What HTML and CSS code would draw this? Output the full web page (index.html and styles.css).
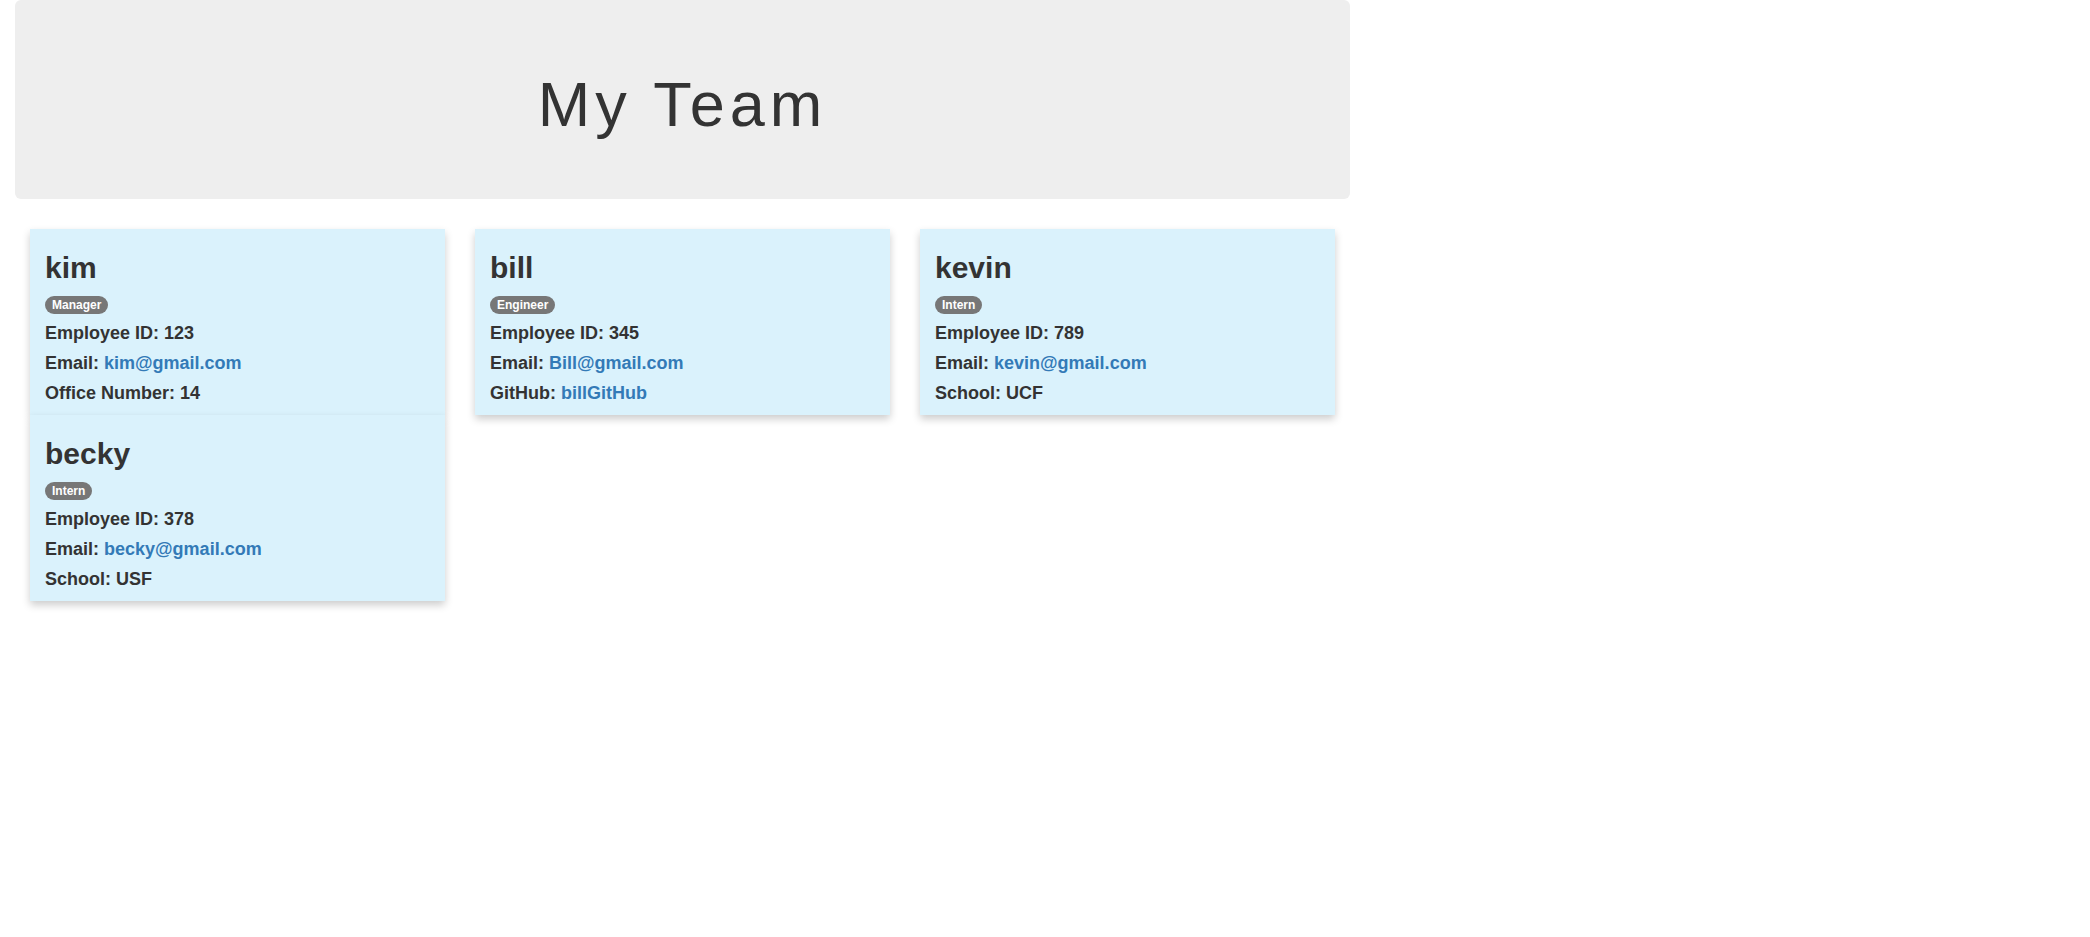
FILE: index.html
```html
<!DOCTYPE html>
<html lang="en">
<head>
<meta charset="utf-8">
<title>My Team</title>
<link rel="stylesheet" href="styles.css">
</head>
<body>
<main class="container">
  <header class="banner"><h1 class="banner-title">My Team</h1></header>
  <section class="team">
    <article class="card">
      <h2 class="name">kim</h2>
      <span class="badge">Manager</span>
      <div class="details">
        <p>Employee ID: 123</p>
        <p>Email: <a href="mailto:kim@gmail.com">kim@gmail.com</a></p>
        <p>Office Number: 14</p>
      </div>
    </article>
    <article class="card">
      <h2 class="name">bill</h2>
      <span class="badge">Engineer</span>
      <div class="details">
        <p>Employee ID: 345</p>
        <p>Email: <a href="mailto:Bill@gmail.com">Bill@gmail.com</a></p>
        <p>GitHub: <a href="https://github.com/billGitHub">billGitHub</a></p>
      </div>
    </article>
    <article class="card">
      <h2 class="name">kevin</h2>
      <span class="badge">Intern</span>
      <div class="details">
        <p>Employee ID: 789</p>
        <p>Email: <a href="mailto:kevin@gmail.com">kevin@gmail.com</a></p>
        <p>School: UCF</p>
      </div>
    </article>
    <article class="card">
      <h2 class="name">becky</h2>
      <span class="badge">Intern</span>
      <div class="details">
        <p>Employee ID: 378</p>
        <p>Email: <a href="mailto:becky@gmail.com">becky@gmail.com</a></p>
        <p>School: USF</p>
      </div>
    </article>
  </section>
</main>
</body>
</html>
```
FILE: styles.css
```css
* {
  box-sizing: border-box;
}

body {
  min-height: 100vh;
  margin: 0;
  background: #fff;
  color: #333;
  font-family: "Liberation Sans", Arial, sans-serif;
}

.container {
  max-width: 1365px;
  padding: 0 15px;
}

.banner {
  margin-bottom: 30px;
  padding: 70px 60px 60px;
  border-radius: 6px;
  background: #eee;
  text-align: center;
}

.banner-title {
  margin: 0;
  font-size: 63px;
  font-weight: 400;
  line-height: 69px;
  letter-spacing: 5px;
}

.team {
  display: grid;
  grid-template-columns: repeat(3, 1fr);
  column-gap: 30px;
  padding: 0 15px;
}

.card {
  display: flex;
  flex-direction: column;
  align-items: flex-start;
  padding: 22px 15px 12px;
  background: #daf2fc;
  box-shadow: 0 4px 8px 0 rgba(0, 0, 0, 0.2);
}

.name {
  margin: 0 0 12px;
  font-size: 30px;
  font-weight: 700;
  line-height: 33px;
}

.badge {
  padding: 3px 7px;
  border-radius: 10px;
  background: #777;
  color: #fff;
  font-size: 12px;
  font-weight: 700;
  line-height: 12px;
}

.details {
  display: grid;
  row-gap: 10px;
  margin-top: 9px;
  font-size: 18px;
  font-weight: 700;
  line-height: 20px;
}

.details p {
  margin: 0;
}

.details a {
  color: #337ab7;
  text-decoration: none;
}
```
